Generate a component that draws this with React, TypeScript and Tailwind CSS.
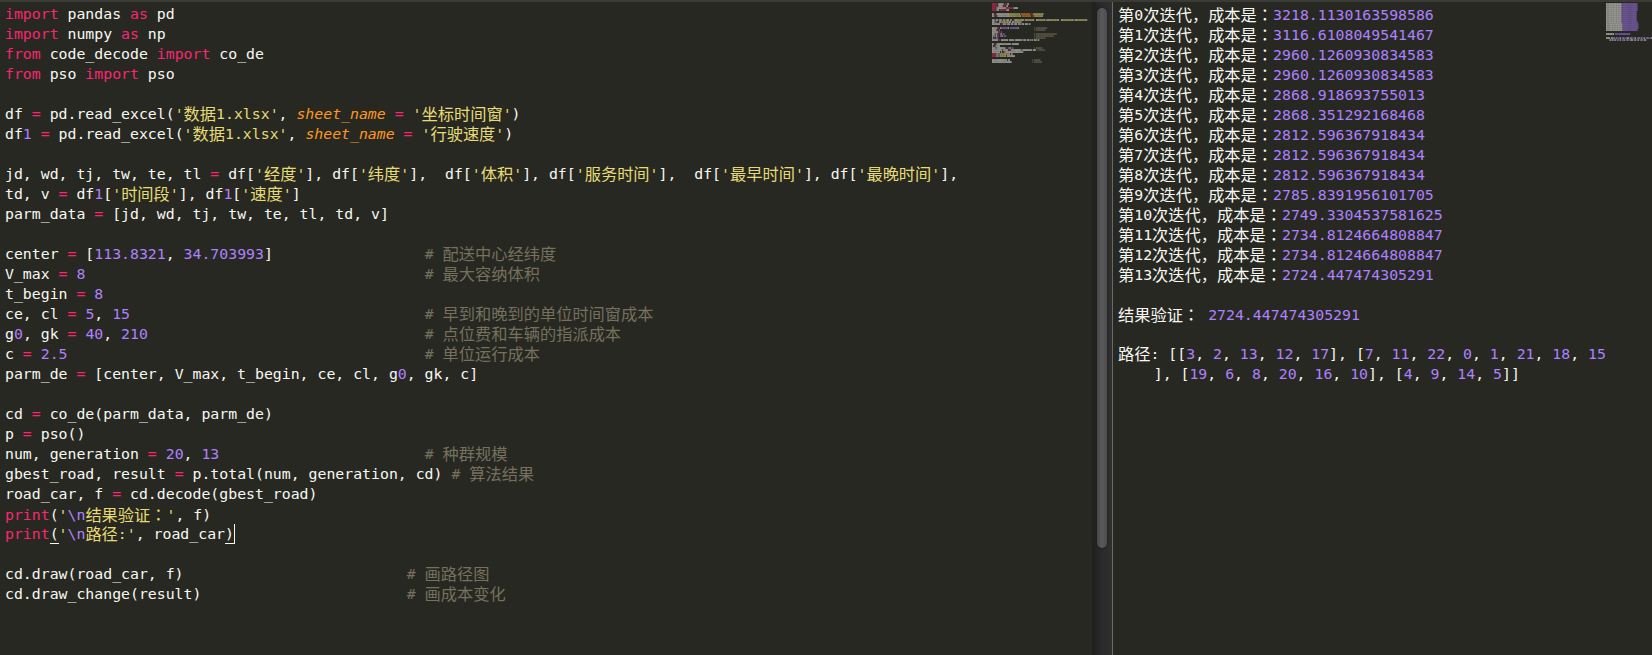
type Kind = 'plain' | 'keyword' | 'string' | 'number' | 'comment' | 'param' | 'match' | 'caret'
type Token = { kind: Kind; text: string }

const kindClass: Record<Kind, string> = {
  plain: 'text-[#f8f8f2]',
  keyword: 'text-[#f92672]',
  string: 'text-[#e6db74]',
  number: 'text-[#ae81ff]',
  comment: 'text-[#75715e]',
  param: 'text-[#fd971f] italic',
  match: 'inline-block h-5 text-[#f8f8f2] shadow-[inset_0_-1px_0_#f8f8f2]',
  caret: 'inline-block h-5 text-[#f8f8f2] shadow-[inset_0_-1px_0_#f8f8f2,1px_0_0_#f8f8f2]',
}

const miniColor: Record<Kind, string> = {
  plain: '#f8f8f2',
  keyword: '#f92672',
  string: '#e6db74',
  number: '#ae81ff',
  comment: '#75715e',
  param: '#fd971f',
  match: '#f8f8f2',
  caret: '#f8f8f2',
}

const pad = (n: number) => ' '.repeat(n)

// ‹ › and « » mark the bracket pair highlighted under the cursor
const source = [
  'import pandas as pd',
  'import numpy as np',
  'from code_decode import co_de',
  'from pso import pso',
  '',
  "df = pd.read_excel('数据1.xlsx', sheet_name = '坐标时间窗')",
  "df1 = pd.read_excel('数据1.xlsx', sheet_name = '行驶速度')",
  '',
  "jd, wd, tj, tw, te, tl = df['经度'], df['纬度'],  df['体积'], df['服务时间'],  df['最早时间'], df['最晚时间'],",
  "td, v = df1['时间段'], df1['速度']",
  'parm_data = [jd, wd, tj, tw, te, tl, td, v]',
  '',
  'center = [113.8321, 34.703993]' + pad(17) + '# 配送中心经纬度',
  'V_max = 8' + pad(38) + '# 最大容纳体积',
  't_begin = 8',
  'ce, cl = 5, 15' + pad(33) + '# 早到和晚到的单位时间窗成本',
  'g0, gk = 40, 210' + pad(31) + '# 点位费和车辆的指派成本',
  'c = 2.5' + pad(40) + '# 单位运行成本',
  'parm_de = [center, V_max, t_begin, ce, cl, g0, gk, c]',
  '',
  'cd = co_de(parm_data, parm_de)',
  'p = pso()',
  'num, generation = 20, 13' + pad(23) + '# 种群规模',
  'gbest_road, result = p.total(num, generation, cd) # 算法结果',
  'road_car, f = cd.decode(gbest_road)',
  "print('\\n结果验证：', f)",
  "print‹(›'\\n路径:', road_car«)»",
  '',
  'cd.draw(road_car, f)' + pad(25) + '# 画路径图',
  'cd.draw_change(result)' + pad(23) + '# 画成本变化',
]

const costs = [
  '3218.1130163598586',
  '3116.6108049541467',
  '2960.1260930834583',
  '2960.1260930834583',
  '2868.918693755013',
  '2868.351292168468',
  '2812.596367918434',
  '2812.596367918434',
  '2812.596367918434',
  '2785.8391956101705',
  '2749.3304537581625',
  '2734.8124664808847',
  '2734.8124664808847',
  '2724.447474305291',
]

function tokenize(line: string): Token[] {
  const re = /(#.*$)|('[^']*')|\b(import|from|as|print)\b|(sheet_name)|(=)|(\d+\.?\d*)|‹(.)›|«(.)»/g
  const out: Token[] = []
  let last = 0
  for (const m of line.matchAll(re)) {
    if (m.index > last) out.push({ kind: 'plain', text: line.slice(last, m.index) })
    if (m[1]) out.push({ kind: 'comment', text: m[1] })
    else if (m[2]) {
      const parts = m[2].split('\\n')
      out.push({ kind: 'string', text: parts[0] })
      if (parts.length > 1) {
        out.push({ kind: 'number', text: '\\n' })
        out.push({ kind: 'string', text: parts[1] })
      }
    } else if (m[3]) out.push({ kind: 'keyword', text: m[3] })
    else if (m[4]) out.push({ kind: 'param', text: m[4] })
    else if (m[5]) out.push({ kind: 'keyword', text: m[5] })
    else if (m[6]) out.push({ kind: 'number', text: m[6] })
    else if (m[7]) out.push({ kind: 'match', text: m[7] })
    else if (m[8]) out.push({ kind: 'caret', text: m[8] })
    last = m.index + m[0].length
  }
  if (last < line.length) out.push({ kind: 'plain', text: line.slice(last) })
  return out
}

const numbersOnly = (text: string): Token[] =>
  text.split(/(\d+\.?\d*)/).map((t, i) => ({ kind: i % 2 ? 'number' : 'plain', text: t }))

const codeRows = source.map(tokenize)

const outputRows: Token[][] = [
  ...costs.map((c, i): Token[] => [
    { kind: 'plain', text: `第${i}次迭代，成本是：` },
    { kind: 'number', text: c },
  ]),
  [],
  [
    { kind: 'plain', text: '结果验证： ' },
    { kind: 'number', text: '2724.447474305291' },
  ],
  [],
  numbersOnly('路径: [[3, 2, 13, 12, 17], [7, 11, 22, 0, 1, 21, 18, 15'),
  numbersOnly('    ], [19, 6, 8, 20, 16, 10], [4, 9, 14, 5]]'),
]

const isCjk = /[\u3000-\u9fff\uff00-\uffef]/

function Text({ text }: { text: string }) {
  return (
    <>
      {text.split(/([\u3000-\u9fff\uff00-\uffef]+)/).map((part, i) =>
        i % 2 ? (
          <span key={i} className="text-[16.24px] not-italic align-[-1px]">
            {part.split(/(：)/).map((p, j) =>
              j % 2 ? (
                // the colon sits centred in its cell in the reference, the TC face has it that way
                <span key={j} className="font-['Noto_Sans_CJK_TC',sans-serif]">
                  {p}
                </span>
              ) : (
                p
              ),
            )}
          </span>
        ) : (
          part
        ),
      )}
    </>
  )
}

function Rows({ rows }: { rows: Token[][] }) {
  return (
    <>
      {rows.map((row, i) => (
        <div key={i} className="h-5 whitespace-pre">
          {row.map((t, j) => (
            <span key={j} className={kindClass[t.kind]}>
              <Text text={t.text} />
            </span>
          ))}
        </div>
      ))}
    </>
  )
}

// tiny blurred copy of the text, same idea as the editor minimap
function Minimap({ rows, width }: { rows: Token[][]; width: number }) {
  const rects: { x: number; y: number; w: number; fill: string }[] = []
  rows.forEach((row, r) => {
    let col = 0
    row.forEach((t) => {
      for (const ch of t.text) {
        const w = isCjk.test(ch) ? 1.62 : 0.893
        if (ch !== ' ') rects.push({ x: col, y: r * 2, w, fill: miniColor[t.kind] })
        col += w
      }
    })
  })
  return (
    <svg width={width} height={70} className="block">
      {rects.map((b, i) => (
        <rect key={i} x={b.x} y={b.y + 0.2} width={b.w} height={1.7} fill={b.fill} opacity={0.6} />
      ))}
    </svg>
  )
}

function Scrollbar() {
  return (
    <div className="w-5 shrink-0 pt-[6px] pl-[5px] bg-gradient-to-r from-[#1f1f1d] via-[#2a2a2a] to-[#2f2f2f]">
      <div className="w-[10px] h-[540px] rounded-t-[5px] rounded-b-[5px] bg-gradient-to-r from-[#464646] via-[#5a5a5a] to-[#4c4c4c] shadow-[0_0_2px_#161616]" />
    </div>
  )
}

export default function App() {
  return (
    <div className="w-[1652px] h-[655px] overflow-hidden flex flex-col bg-[#272822] font-['DejaVu_Sans_Mono','Noto_Sans_CJK_SC',monospace] text-[14.83px] leading-5">
      <div className="h-[2px] shrink-0 bg-[#3a3a37]" />
      <div className="flex flex-1 min-h-0">
        <div className="flex-1 min-w-0 overflow-hidden pt-[2px] pl-[5px]">
          <Rows rows={codeRows} />
        </div>
        <div className="w-[100px] shrink-0 pt-[1px]">
          <Minimap rows={codeRows} width={100} />
        </div>
        <Scrollbar />
        <div className="w-[540px] shrink-0 flex border-l border-[#6a6a68]">
          <div className="flex-1 min-w-0 overflow-hidden pt-[2px] pl-[5px]">
            <Rows rows={outputRows} />
          </div>
          <div className="w-[46px] shrink-0 pt-[1px]">
            <Minimap rows={outputRows} width={46} />
          </div>
        </div>
      </div>
    </div>
  )
}
